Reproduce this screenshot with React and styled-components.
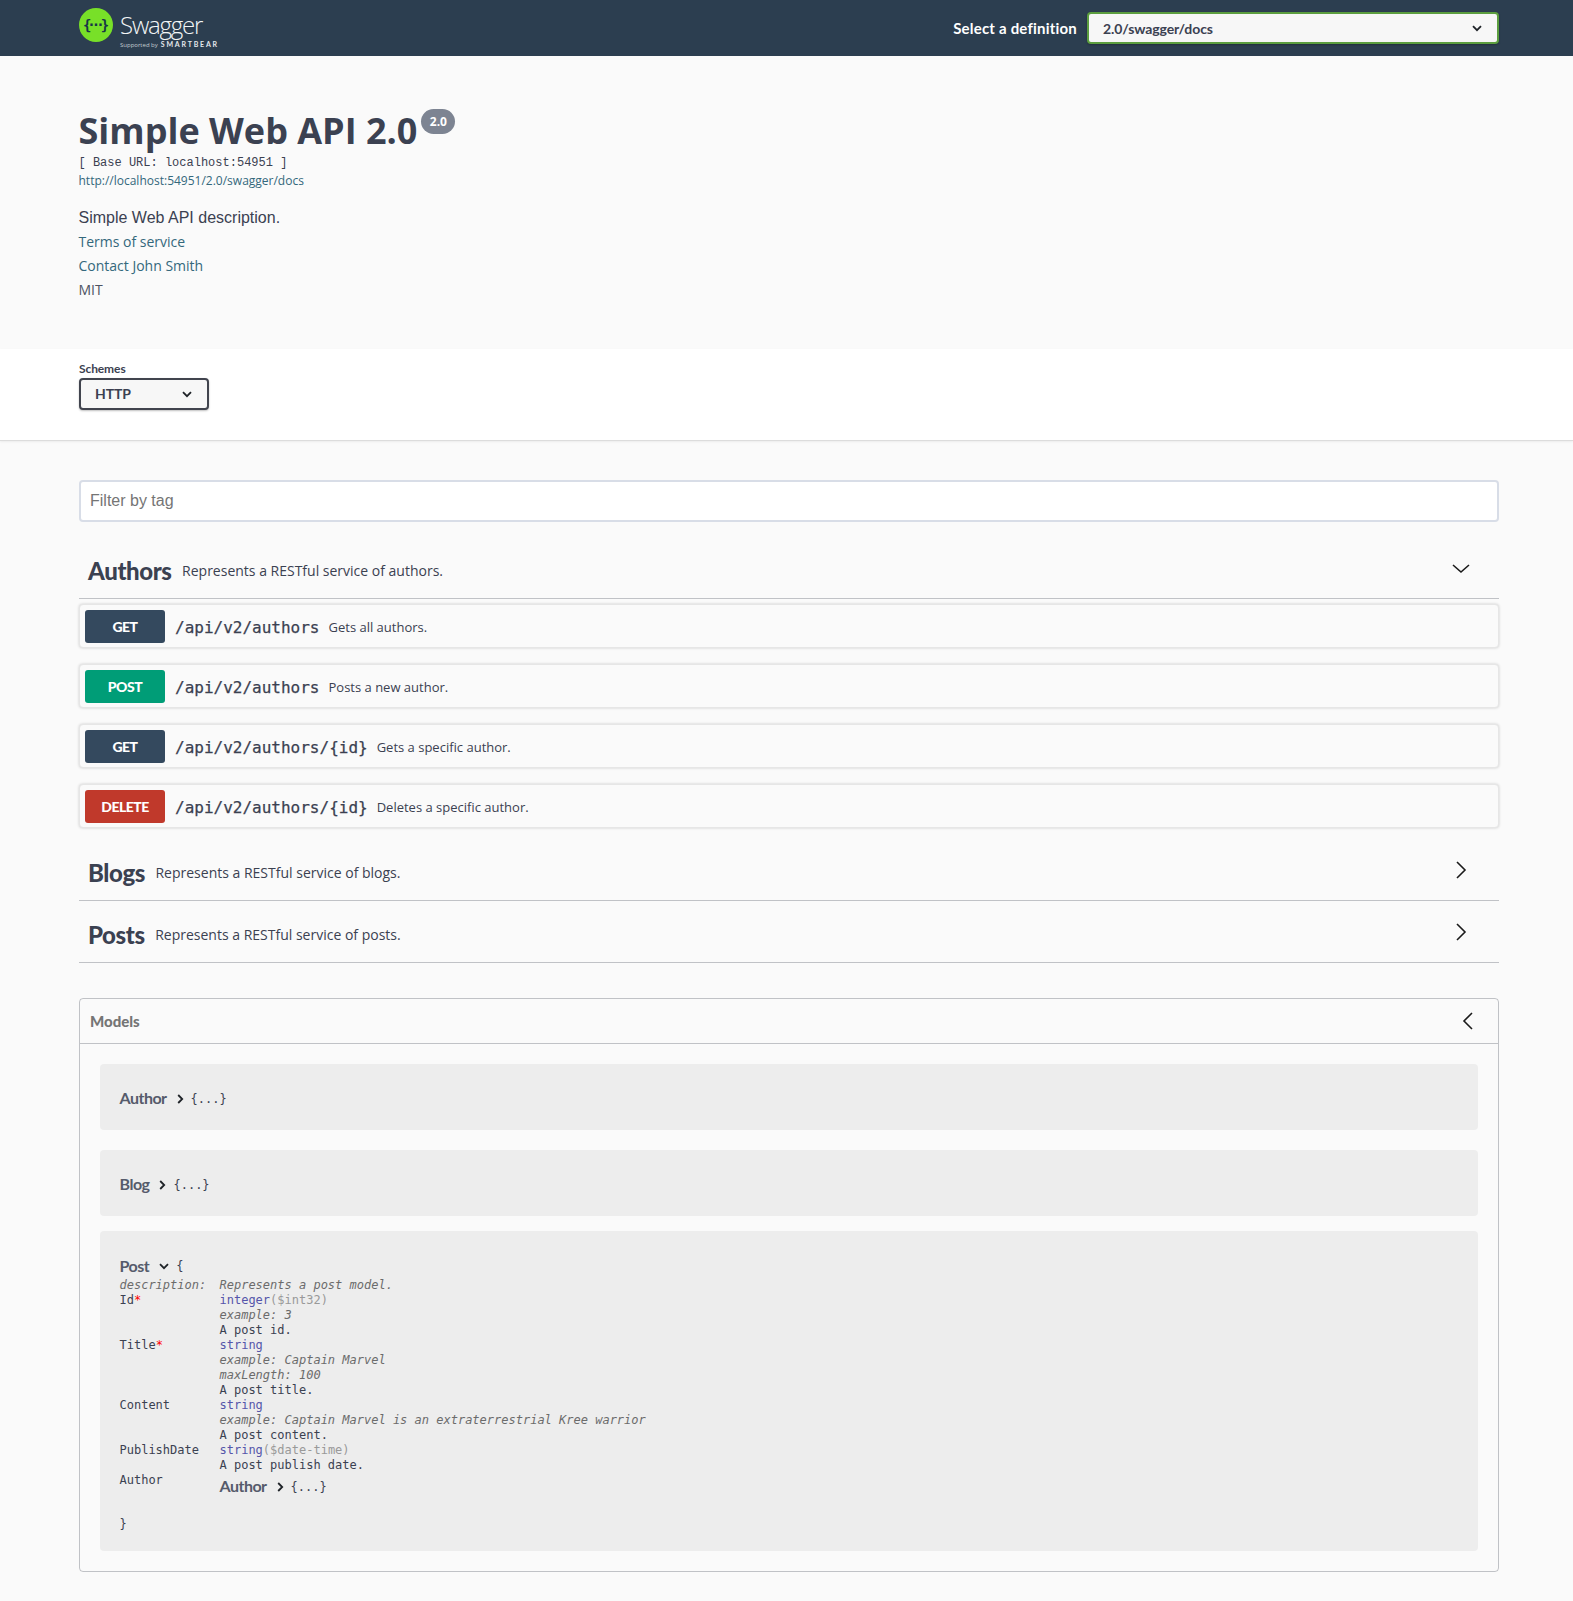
import React from 'react';
import styled, { createGlobalStyle } from 'styled-components';

const GlobalStyle = createGlobalStyle`
  html, body { margin: 0; padding: 0; background: #fafafa; }
  body { font-family: "Open Sans", sans-serif; color: #3b4151; min-height: 1601px; }
  * { box-sizing: border-box; }
`;

const MONO = '"DejaVu Sans Mono", "Liberation Mono", monospace';
const HEAD = 'Lato, "Open Sans", sans-serif';

const Wrapper = styled.div`
  padding: 0 74px 0 79px;
`;

// Top bar
const TopBar = styled.header`
  height: 56px;
  background: #2c3e50;
`;

const TopBarInner = styled(Wrapper)`
  height: 100%;
  display: flex;
  align-items: center;
  justify-content: space-between;
`;

const Logo = styled.div`
  display: flex;
  align-items: flex-start;
  gap: 7px;
  height: 56px;
  padding-top: 8px;
`;

const LogoMark = styled.div`
  width: 34px;
  height: 34px;
  padding-right: 4px;
  border-radius: 50%;
  background: #78e028;
  color: #173647;
  display: flex;
  align-items: center;
  justify-content: center;
  font: 700 14px/1 ${MONO};
  letter-spacing: -4px;
`;

const LogoText = styled.div`
  display: flex;
  flex-direction: column;
`;

const LogoName = styled.div`
  font: 300 24px/32px "Open Sans", sans-serif;
  letter-spacing: -1.2px;
  color: #f2f5f6;
  margin-top: 1px;
`;

const LogoSub = styled.div`
  display: flex;
  align-items: baseline;
  gap: 3px;
  margin-top: -1px;
  font: 400 6px/8px "Open Sans", sans-serif;
  color: #c4ccd2;
  white-space: nowrap;
`;

const LogoBear = styled.span`
  font: 700 7px/8px Lato, sans-serif;
  letter-spacing: 1.8px;
  color: #e6e9ec;
`;

const DefinitionPicker = styled.div`
  display: flex;
  align-items: center;
  gap: 10px;
`;

const DefinitionLabel = styled.span`
  font: 700 15px/20px ${HEAD};
  letter-spacing: 0.2px;
  color: #fff;
`;

const SelectBox = styled.div`
  display: flex;
  align-items: center;
  justify-content: space-between;
  height: 32px;
  width: ${props => props.$width}px;
  padding: ${props => props.$padding};
  background: #f7f7f7;
  border: 2px solid ${props => props.$border};
  border-radius: 4px;
  box-shadow: 0 1px 2px rgba(0, 0, 0, 0.25);
  font: 700 14px/20px ${HEAD};
  letter-spacing: -0.1px;
  color: #3b4151;
`;

const SmallChevron = () => (
  <svg width="10" height="7" viewBox="0 0 10 7" fill="none" stroke="#1f2328" strokeWidth="1.8">
    <polyline points="1,1.2 5,5.2 9,1.2" />
  </svg>
);

const BigChevron = ({ dir }) => {
  const points = {
    down: '2,6 10,13 18,6',
    right: '6,2 14,10 6,18',
    left: '14,2 6,10 14,18',
  }[dir];
  return (
    <svg width="20" height="20" viewBox="0 0 20 20" fill="none" stroke="#1a1a1a" strokeWidth="1.6">
      <polyline points={points} />
    </svg>
  );
};

// Info block
const InfoSection = styled.div`
  height: 293px;
  padding: 50px 74px 0 78.5px;
`;

const TitleRow = styled.div`
  display: flex;
  align-items: flex-start;
  height: 49px;
`;

const Title = styled.h1`
  margin: 0;
  font: 700 36px/49px "Open Sans", sans-serif;
  color: #3b4151;
`;

const VersionBadge = styled.span`
  margin: 3px 0 0 4px;
  width: 34px;
  height: 25px;
  border-radius: 57px;
  background: #7d8492;
  color: #fff;
  font: 700 12px/25px "Open Sans", sans-serif;
  text-align: center;
`;

const BaseUrl = styled.div`
  font: 400 12px/17px "Liberation Mono", monospace;
  color: #3b4151;
`;

const SpecLink = styled.a`
  display: block;
  font: 400 12px/20px "Open Sans", sans-serif;
  color: #34687c;
  margin-top: -1px;
`;

const Description = styled.p`
  margin: 15px 0 0;
  font: 400 16px/24px "Liberation Sans", Arial, sans-serif;
  color: #3b4151;
`;

const InfoLine = styled.div`
  font: 400 14px/24px "Open Sans", sans-serif;
  color: ${props => props.$muted ? '#4d5362' : '#34687c'};
`;

// Schemes
const SchemeBar = styled(Wrapper)`
  height: 92px;
  padding-top: 12px;
  background: #fff;
  border-bottom: 1px solid #dcdcdc;
  box-shadow: 0 1px 2px rgba(0, 0, 0, 0.06);
`;

const SchemeLabel = styled.div`
  font: 700 12px/16px ${HEAD};
  letter-spacing: -0.1px;
  color: #3b4151;
  margin-bottom: 1px;
`;

// Tag sections
const Content = styled(Wrapper)`
  padding-top: 39px;
`;

const FilterInput = styled.input`
  display: block;
  width: 100%;
  height: 42px;
  padding: 0 9px;
  background: #fff;
  border: 2px solid #d8dde7;
  border-radius: 4px;
  font: 400 16px "Liberation Sans", Arial, sans-serif;
  outline: none;
  &::placeholder { color: #757575; opacity: 1; }
`;

const TagHeader = styled.div`
  display: flex;
  align-items: center;
  height: ${props => props.$height || 61}px;
  margin-top: ${props => props.$top}px;
  padding: 6px 28px 0 9px;
  border-bottom: 1px solid rgba(59, 65, 81, 0.3);
`;

const TagName = styled.h3`
  margin: 0;
  font: 900 24px/32px ${HEAD};
  letter-spacing: -0.4px;
  color: #3b4151;
`;

const TagDesc = styled.span`
  flex: 1;
  margin-left: 10.5px;
  font: 400 14px/20px "Open Sans", sans-serif;
  color: #3b4151;
`;

const ChevronSlot = styled.span`
  display: flex;
  margin-top: ${props => props.$shift || 0}px;
`;

const OperationList = styled.div`
  display: flex;
  flex-direction: column;
  gap: 16px;
  padding-top: 5px;
`;

const Operation = styled.div`
  display: flex;
  align-items: center;
  height: 44px;
  padding-left: 5px;
  background: #fafafa;
  border: 1px solid #e6e6e6;
  border-radius: 4px;
  box-shadow: 0 0 3px rgba(0, 0, 0, 0.19);
`;

const METHOD_COLORS = { GET: '#34495e', POST: '#009d77', DELETE: '#c0392b' };

const MethodBadge = styled.span`
  width: 80px;
  height: 33px;
  border-radius: 3px;
  background: ${props => METHOD_COLORS[props.$method]};
  color: #fff;
  font: 900 14px/34px ${HEAD};
  letter-spacing: -0.5px;
  text-align: center;
`;

const OperationPath = styled.span`
  margin-left: 10px;
  padding-top: 4px;
  font: 500 16px/20px ${MONO};
  -webkit-text-stroke: 0.25px #3b4151;
  color: #3b4151;
`;

const OperationDesc = styled.span`
  margin-left: 9px;
  padding-top: 2px;
  font: 400 13px/20px "Open Sans", sans-serif;
  color: #3b4151;
`;

// Models
const ModelsBox = styled.section`
  margin-top: 35px;
  border: 1px solid rgba(59, 65, 81, 0.3);
  border-radius: 4px;
`;

const ModelsHeader = styled.div`
  display: flex;
  align-items: center;
  justify-content: space-between;
  height: 45px;
  padding: 0 20px 0 10px;
  border-bottom: 1px solid rgba(59, 65, 81, 0.3);
`;

const ModelsTitle = styled.h4`
  margin: 0;
  font: 900 15px/20px ${HEAD};
  letter-spacing: 0;
  color: #757575;
`;

const ModelsBody = styled.div`
  display: flex;
  flex-direction: column;
  padding: 20px;
`;

const ModelCard = styled.div`
  margin-top: ${props => props.$top || 0}px;
  height: ${props => props.$height}px;
  padding: ${props => props.$padding || '2px 19.5px 0'};
  display: ${props => props.$open ? 'block' : 'flex'};
  align-items: center;
  background: rgba(0, 0, 0, 0.05);
  border-radius: 4px;
`;

const ModelHead = styled.div`
  display: flex;
  align-items: center;
  height: ${props => props.$height || 24}px;
`;

const ModelName = styled.span`
  font: 700 16px/24px ${HEAD};
  letter-spacing: -0.5px;
  color: #555b6b;
`;

const ModelArrow = styled.span`
  display: flex;
  margin: 2px 7px 0 10px;
`;

const Braces = styled.span`
  font: 400 12px/15px ${MONO};
  color: #3b4151;
  margin-top: 2px;
`;

const ModelRow = styled.div`
  display: flex;
  font: 400 12px/15px ${MONO};
  color: #3b4151;
`;

const PropName = styled.div`
  width: 100px;
  flex: none;
`;

const PropValue = styled.div`
  display: flex;
  flex-direction: column;
`;

const Italic = styled.div`
  font-style: italic;
  color: #6b6b6b;
`;

const Required = styled.span`
  color: #f00;
`;

const TypeName = styled.span`
  color: #55a;
`;

const TypeFormat = styled.span`
  color: #999;
`;

const ClosingBrace = styled(ModelRow)`
  margin-top: 18px;
`;

const operations = [
  { method: 'GET', path: '/api/v2/authors', desc: 'Gets all authors.' },
  { method: 'POST', path: '/api/v2/authors', desc: 'Posts a new author.' },
  { method: 'GET', path: '/api/v2/authors/{id}', desc: 'Gets a specific author.' },
  { method: 'DELETE', path: '/api/v2/authors/{id}', desc: 'Deletes a specific author.' },
];

const ModelLine = ({ name, height, children }) => (
  <ModelHead $height={height}>
    <ModelName>{name}</ModelName>
    <ModelArrow>{children}</ModelArrow>
    <Braces>{'{...}'}</Braces>
  </ModelHead>
);

const ArrowRight = () => (
  <svg width="7" height="10" viewBox="0 0 7 10" fill="none" stroke="#1f2328" strokeWidth="1.8">
    <polyline points="1.2,1 5.2,5 1.2,9" />
  </svg>
);

const App = () => (
  <>
    <GlobalStyle />
    <TopBar>
      <TopBarInner>
        <Logo>
          <LogoMark>{'{···}'}</LogoMark>
          <LogoText>
            <LogoName>Swagger</LogoName>
            <LogoSub>Supported by <LogoBear>SMARTBEAR</LogoBear></LogoSub>
          </LogoText>
        </Logo>
        <DefinitionPicker>
          <DefinitionLabel>Select a definition</DefinitionLabel>
          <SelectBox $width={412} $padding="1px 15px 0 14px" $border="#5c9e3f">
            2.0/swagger/docs
            <SmallChevron />
          </SelectBox>
        </DefinitionPicker>
      </TopBarInner>
    </TopBar>

    <InfoSection>
      <TitleRow>
        <Title>Simple Web API 2.0</Title>
        <VersionBadge>2.0</VersionBadge>
      </TitleRow>
      <BaseUrl>[ Base URL: localhost:54951 ]</BaseUrl>
      <SpecLink>http://localhost:54951/2.0/swagger/docs</SpecLink>
      <Description>Simple Web API description.</Description>
      <InfoLine>Terms of service</InfoLine>
      <InfoLine>Contact John Smith</InfoLine>
      <InfoLine $muted>MIT</InfoLine>
    </InfoSection>

    <SchemeBar>
      <SchemeLabel>Schemes</SchemeLabel>
      <SelectBox $width={130} $padding="0 15px 0 14px" $border="#41444e">
        HTTP
        <SmallChevron />
      </SelectBox>
    </SchemeBar>

    <Content>
      <FilterInput placeholder="Filter by tag" readOnly />

      <TagHeader $top={16}>
        <TagName>Authors</TagName>
        <TagDesc>Represents a RESTful service of authors.</TagDesc>
        <ChevronSlot $shift={-5}><BigChevron dir="down" /></ChevronSlot>
      </TagHeader>
      <OperationList>
        {operations.map((op, index) => (
          <Operation key={index}>
            <MethodBadge $method={op.method}>{op.method}</MethodBadge>
            <OperationPath>{op.path}</OperationPath>
            <OperationDesc>{op.desc}</OperationDesc>
          </Operation>
        ))}
      </OperationList>

      <TagHeader $top={12}>
        <TagName>Blogs</TagName>
        <TagDesc>Represents a RESTful service of blogs.</TagDesc>
        <ChevronSlot $shift={-7}><BigChevron dir="right" /></ChevronSlot>
      </TagHeader>
      <TagHeader $top={0} $height={62}>
        <TagName>Posts</TagName>
        <TagDesc>Represents a RESTful service of posts.</TagDesc>
        <ChevronSlot $shift={-5}><BigChevron dir="right" /></ChevronSlot>
      </TagHeader>

      <ModelsBox>
        <ModelsHeader>
          <ModelsTitle>Models</ModelsTitle>
          <BigChevron dir="left" />
        </ModelsHeader>
        <ModelsBody>
          <ModelCard $height={66}>
            <ModelLine name="Author"><ArrowRight /></ModelLine>
          </ModelCard>
          <ModelCard $height={66} $top={20}>
            <ModelLine name="Blog"><ArrowRight /></ModelLine>
          </ModelCard>
          <ModelCard $height={320} $top={15} $open $padding="22px 19.5px 0">
            <ModelHead $height={25}>
              <ModelName>Post</ModelName>
              <ModelArrow>
                <SmallChevron />
              </ModelArrow>
              <Braces>{'{'}</Braces>
            </ModelHead>
            <ModelRow>
              <PropName><Italic>description:</Italic></PropName>
              <PropValue><Italic>Represents a post model.</Italic></PropValue>
            </ModelRow>
            <ModelRow>
              <PropName>Id<Required>*</Required></PropName>
              <PropValue>
                <div><TypeName>integer</TypeName><TypeFormat>($int32)</TypeFormat></div>
                <Italic>example: 3</Italic>
                <div>A post id.</div>
              </PropValue>
            </ModelRow>
            <ModelRow>
              <PropName>Title<Required>*</Required></PropName>
              <PropValue>
                <TypeName>string</TypeName>
                <Italic>example: Captain Marvel</Italic>
                <Italic>maxLength: 100</Italic>
                <div>A post title.</div>
              </PropValue>
            </ModelRow>
            <ModelRow>
              <PropName>Content</PropName>
              <PropValue>
                <TypeName>string</TypeName>
                <Italic>example: Captain Marvel is an extraterrestrial Kree warrior</Italic>
                <div>A post content.</div>
              </PropValue>
            </ModelRow>
            <ModelRow>
              <PropName>PublishDate</PropName>
              <PropValue>
                <div><TypeName>string</TypeName><TypeFormat>($date-time)</TypeFormat></div>
                <div>A post publish date.</div>
              </PropValue>
            </ModelRow>
            <ModelRow>
              <PropName>Author</PropName>
              <PropValue>
                <ModelLine name="Author" height={26}><ArrowRight /></ModelLine>
              </PropValue>
            </ModelRow>
            <ClosingBrace>{'}'}</ClosingBrace>
          </ModelCard>
        </ModelsBody>
      </ModelsBox>
    </Content>
  </>
);

export default App;
